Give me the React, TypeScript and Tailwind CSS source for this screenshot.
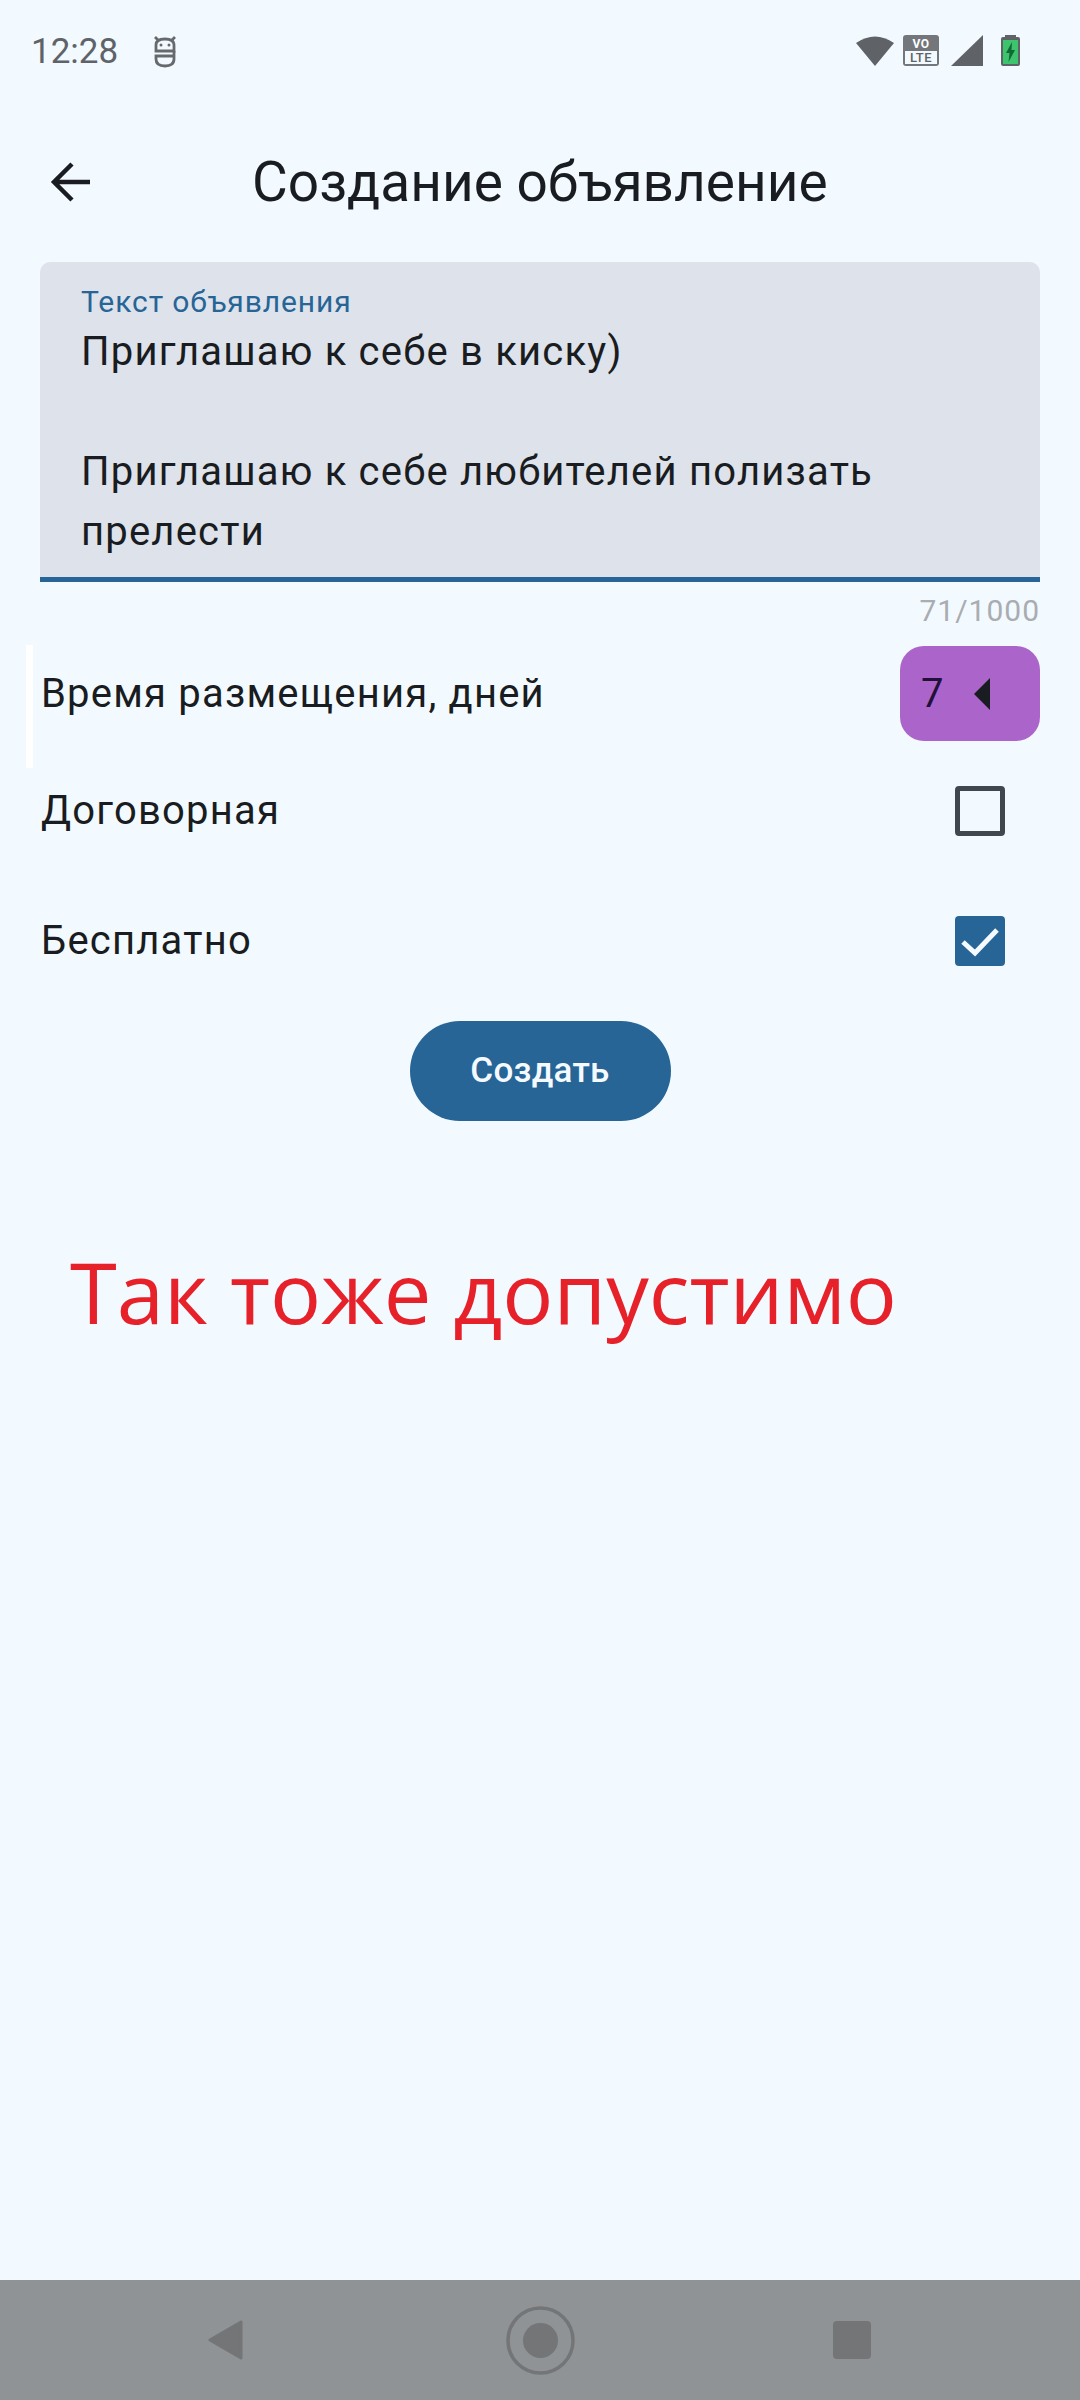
const roboto = "font-['Roboto',sans-serif]";

function StatusBar() {
  return (
    <div className="h-[103px] flex items-start justify-between pl-[31px] pr-[60px] pt-[32px]">
      <div className="flex items-center gap-[35px] h-[40px]">
        <span className="text-[35px] leading-[40px] text-[#5f6368]">12:28</span>
        <svg className="mb-[2px]" width="24" height="33" viewBox="0 0 24 33" fill="none" stroke="#666a6e" strokeWidth="2.800">
          <path d="M3 10 Q3 4 12 4 Q21 4 21 10 V16 H3 Z" />
          <path d="M2 2 L6 6 M22 2 L18 6" />
          <path d="M21 16 V21 H3 V24 Q3 31 12 31 Q21 31 21 24 V21" />
          <circle cx="8" cy="10" r="1.500" fill="#666a6e" stroke="none" />
          <circle cx="16" cy="10" r="1.500" fill="#666a6e" stroke="none" />
        </svg>
      </div>
      <div className="flex items-center h-[37px]">
        <svg width="38" height="31" viewBox="0 0 38 31"><path d="M0 8 Q19 -5 38 8 L19 31 Z" fill="#5f6368" /></svg>
        <div className="ml-[9px] w-[36px] h-[31px] rounded-[3px] bg-[#73777b] flex flex-col items-center p-[2px]">
          <span className="text-[12px] leading-[14px] font-bold tracking-[0.5px] text-white">VO</span>
          <span className="w-full bg-[#f3faff] text-[13px] leading-[13px] font-medium tracking-[0.5px] text-[#5f6368] text-center">LTE</span>
        </div>
        <svg className="ml-[12px]" width="32" height="31" viewBox="0 0 32 31"><path d="M0 31 L32 0 V31 Z" fill="#5f6368" /></svg>
        <svg className="ml-[18px]" width="19" height="31" viewBox="0 0 19 31">
          <rect x="4" y="0" width="11" height="2" fill="#5f6368" />
          <rect x="0" y="2" width="19" height="29" rx="2" fill="#5f6368" />
          <rect x="2" y="5" width="15" height="24" fill="#3ec46d" />
          <path d="M11 7 L5 18 H8.500 L7.500 27 L14 15 H10.500 Z" fill="#0f6b33" />
        </svg>
      </div>
    </div>
  );
}

function Row({ label, checked }: { label: string; checked: boolean }) {
  return (
    <div className="h-[130px] flex items-center justify-between pl-[41px] pr-[75px]">
      <span className="text-[40px] leading-[60px] tracking-[1.2px] text-[#191c20]">{label}</span>
      {checked ? (
        <div className="w-[50px] h-[50px] rounded-[4px] bg-[#266596]">
          <svg width="50" height="50" viewBox="0 0 50 50" fill="none" stroke="#f4faff" strokeWidth="5">
            <path d="M8 26 L20 37 L42 14" />
          </svg>
        </div>
      ) : (
        <div className="w-[50px] h-[50px] rounded-[4px] border-[5px] border-[#41474f]" />
      )}
    </div>
  );
}

export default function App() {
  return (
    <div className={`w-[1080px] h-[2400px] bg-[#f3faff] flex flex-col ${roboto}`}>
      <StatusBar />
      <div className="h-[159px] pb-[1px] flex items-center pl-[49px]">
        <svg width="42" height="42" viewBox="0 0 42 42" fill="none" stroke="#191c20" strokeWidth="4.5">
          <path d="M41 21 H5 M23 3 L5 21 L23 39" />
        </svg>
        <span className="ml-[161px] text-[55px] leading-[64px] text-[#191c20] whitespace-nowrap">Создание объявление</span>
      </div>
      <div className="mx-[40px] h-[320px] bg-[#dee2eb] rounded-t-[10px] border-b-[5px] border-[#266596] px-[41px] pt-[20px]">
        <div className="text-[30px] leading-[40px] tracking-[0.9px] text-[#266596]">Текст объявления</div>
        <div className="text-[40px] leading-[60px] tracking-[1.2px] text-[#191c20]">
          <div>Приглашаю к себе в киску)</div>
          <div className="h-[60px]" />
          <div>Приглашаю к себе любителей полизать</div>
          <div>прелести</div>
        </div>
      </div>
      <div className="h-[63px] pb-[6px] pr-[40px] flex items-center justify-end text-[30px] tracking-[1px] text-[#a9acb0]">71/1000</div>
      <div className="relative h-[97px] mb-[4px] flex items-center justify-between pl-[41px] pr-[40px]">
        <div className="absolute left-[26px] top-0 w-[7px] h-[123px] bg-white" />
        <span className="text-[40px] leading-[60px] tracking-[1.2px] text-[#191c20]">Время размещения, дней</span>
        <div className="w-[140px] h-[95px] rounded-[24px] bg-[#aa64ca] flex items-center pl-[21px] gap-[31px]">
          <span className="text-[40px] leading-[48px] text-[#21103a]">7</span>
          <svg width="16" height="32" viewBox="0 0 16 32"><path d="M16 0 V32 L0 16 Z" fill="#191c20" /></svg>
        </div>
      </div>
      <Row label="Договорная" checked={false} />
      <Row label="Бесплатно" checked />
      <div className="flex justify-center mt-[15px]">
        <div className="w-[261px] h-[100px] rounded-full bg-[#266596] flex items-center justify-center text-[35px] font-medium tracking-[0.25px] text-[#f4faff]">Создать</div>
      </div>
      <div className="mt-[120px] pl-[70px] font-['Open_Sans',sans-serif] font-medium text-[85px] leading-[100px] text-[#e62129] whitespace-nowrap">Так тоже допустимо</div>
      <div className="flex-1" />
      <div className="h-[120px] bg-[#909396] flex items-center pl-[208px]">
        <svg width="35" height="40" viewBox="0 0 35 40"><path d="M33 2 V38 L2 20 Z" fill="#737577" stroke="#737577" strokeWidth="3" strokeLinejoin="round" /></svg>
        <svg className="ml-[263px]" width="69" height="69" viewBox="0 0 69 69">
          <circle cx="34.500" cy="34.500" r="32.500" fill="none" stroke="#737577" strokeWidth="3.500" />
          <circle cx="34.500" cy="34.500" r="17.500" fill="#737577" />
        </svg>
        <div className="ml-[258px] w-[38px] h-[38px] rounded-[4px] bg-[#737577]" />
      </div>
    </div>
  );
}
